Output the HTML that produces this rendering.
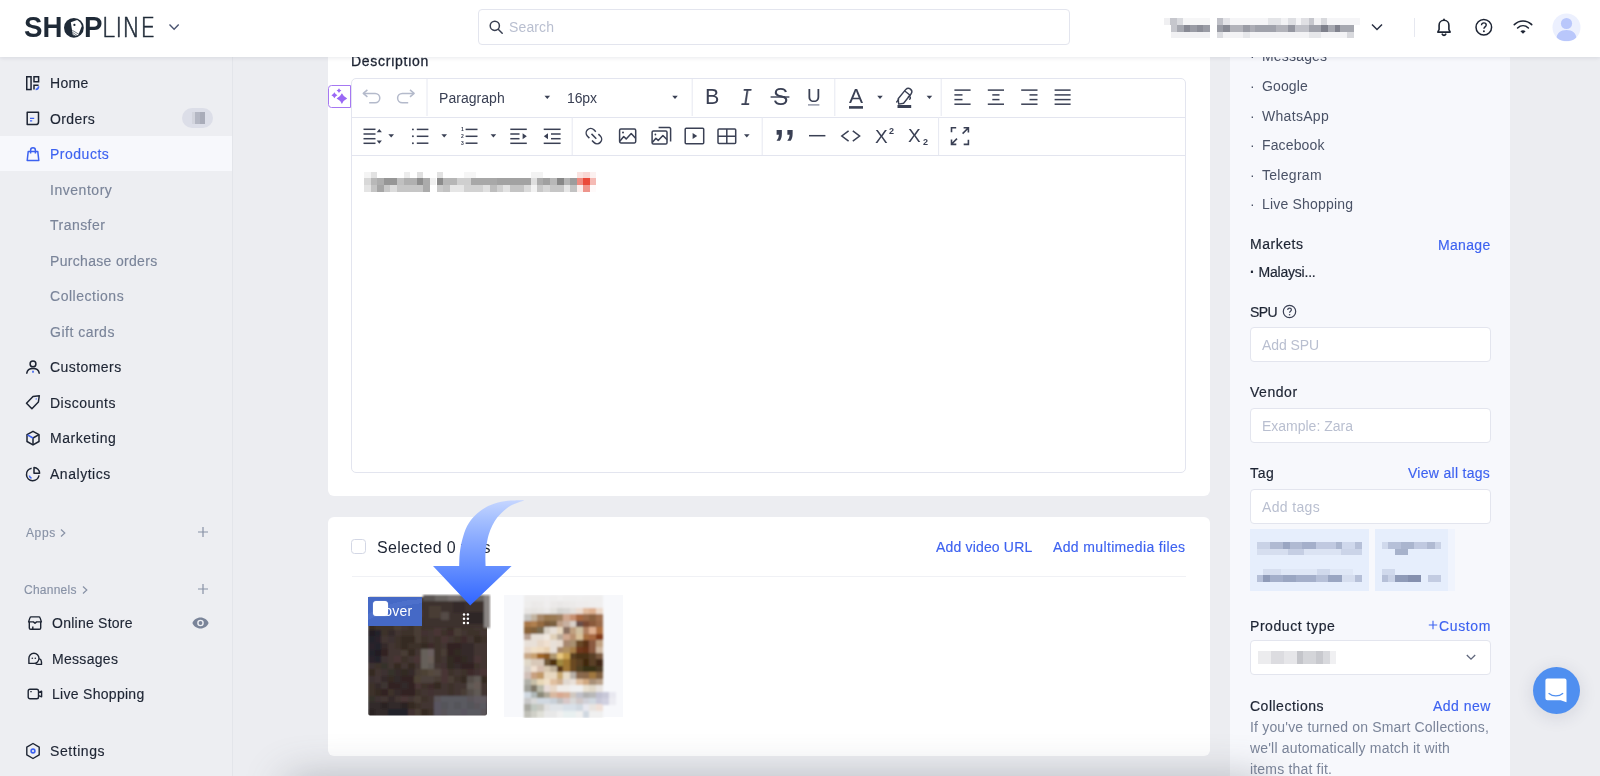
<!DOCTYPE html>
<html lang="en">
<head>
<meta charset="utf-8">
<title>SHOPLINE Admin - Product</title>
<style>
*{box-sizing:border-box;margin:0;padding:0}
html,body{width:1600px;height:776px;overflow:hidden}
body{position:relative;background:#ecedf1;font-family:"Liberation Sans",sans-serif;font-size:14px;color:#1d2433;-webkit-font-smoothing:antialiased}
.abs{position:absolute}
.t,#side .nav,#side .sec,#rp .li,#rp .lab,#rp .lnk,#rp .dot,#rp .inp span,#search .ph,#ctext{will-change:transform}
.t{position:absolute;white-space:nowrap;height:20px;line-height:20px}
/* header */
#hdr{position:absolute;left:0;top:0;width:1600px;height:56.600px;background:#fff;box-shadow:0 1px 4px rgba(30,40,70,.10);z-index:20}
#search{position:absolute;left:478px;top:9px;width:592px;height:36px;border:1px solid #e3e5ee;border-radius:4px;background:#fff}
#search .ph{position:absolute;left:30px;top:7px;line-height:20px;font-size:14px;color:#b9bfd0}
/* sidebar */
#side{position:absolute;left:0;top:56px;width:233px;height:720px;background:#edeef2;border-right:1px solid #e3e5ea;z-index:5}
#side .nav{position:absolute;left:50px;height:20px;line-height:20px;font-size:14px;color:#1d2433;white-space:nowrap;letter-spacing:.25px}
#side .nav{-webkit-text-stroke:.22px currentColor}
#side .sub{color:#7a8499;-webkit-text-stroke:.12px currentColor}
#side .act{position:absolute;left:0;top:80px;width:232px;height:35px;background:#f7f8fc}
#side .sec{-webkit-text-stroke:.15px currentColor;position:absolute;height:16px;line-height:16px;font-size:12px;color:#8892a6;white-space:nowrap;letter-spacing:.3px}
#side svg{position:absolute}
#side .nav,#side svg,#side .sec{-webkit-text-stroke:.15px currentColor;margin-top:.7px}
/* main cards */
.card{position:absolute;background:#fff;border-radius:6px}
/* right panel */
#rp{position:absolute;left:1230px;top:56px;width:280px;height:720px;background:#f7f8fc}
#rp .li{position:absolute;left:32px;height:20px;line-height:20px;font-size:14px;color:#4a5266;white-space:nowrap;letter-spacing:.2px}
#rp .dot{position:absolute;left:20px;height:20px;line-height:20px;font-size:14px;color:#4a5266}
#rp .lab{position:absolute;left:20px;height:20px;line-height:20px;font-size:14px;color:#1d2433;white-space:nowrap;letter-spacing:.2px}
#rp .lab{-webkit-text-stroke:.2px currentColor}
#rp .lnk,.blue.t{-webkit-text-stroke:.15px currentColor}
#rp .lnk{position:absolute;right:20px;height:20px;line-height:20px;font-size:14px;color:#3d62f0;white-space:nowrap;letter-spacing:.2px}
#rp .inp{position:absolute;left:20px;width:241px;height:35px;border:1px solid #e3e5ee;border-radius:4px;background:#fff}
#rp .inp span{position:absolute;left:11px;top:7px;line-height:20px;font-size:14px;color:#b9bfd0;letter-spacing:.2px}
.blue,#side .blue{color:#3d62f0}
</style>
</head>
<body>

<!-- ================= MAIN CARDS ================= -->
<div class="card" id="card1" style="left:328px;top:-20px;width:882px;height:516px">
  <div class="t" style="left:23px;top:71px;font-size:14px;color:#1d2433;-webkit-text-stroke:.3px #1d2433;letter-spacing:0.73px">Description</div>
</div>
<!-- AI button -->
<div class="abs" style="left:328px;top:84.500px;width:23.300px;height:23px;border:1.300px solid #a678f2;border-radius:3.500px 0 0 3.500px;background:#fff;z-index:3"></div>
<svg class="abs" style="left:328px;top:84px;z-index:4" width="24" height="24" viewBox="328 84 24 24" fill="#9a68f5"><path d="M341.9 93.30Q343.60 96.90 347.20 98.6Q343.60 100.30 341.9 103.90Q340.20 100.30 336.60 98.6Q340.20 96.90 341.9 93.30z"/><path d="M334.4 92.20Q335.36 94.24 337.40 95.2Q335.36 96.16 334.4 98.20Q333.44 96.16 331.40 95.2Q333.44 94.24 334.4 92.20z"/><path d="M339 88.20Q339.77 89.83 341.40 90.6Q339.77 91.37 339 93.00Q338.23 91.37 336.60 90.6Q338.23 89.83 339 88.20z"/></svg>
<!-- editor -->
<div class="abs" id="editor" style="left:351px;top:78px;width:835px;height:395px;border:1px solid #e3e5ef;border-radius:5px;background:#fff">
  <div class="abs" style="left:0;top:38px;width:833px;height:1px;background:#e3e5ef"></div>
  <div class="abs" style="left:0;top:76px;width:833px;height:1px;background:#e3e5ef"></div>
</div>
<svg class="abs" style="left:351px;top:78px" width="835" height="78" viewBox="351 78 835 78" fill="none" stroke="#3a4054" stroke-width="1.500"><path d="M427 79V116" stroke="#e6e8f1" stroke-width="1"/><path d="M692.2 79V116" stroke="#e6e8f1" stroke-width="1"/><path d="M834.8 79V116" stroke="#e6e8f1" stroke-width="1"/><path d="M941.2 79V116" stroke="#e6e8f1" stroke-width="1"/><path d="M572.2 117V155" stroke="#e6e8f1" stroke-width="1"/><path d="M762.2 117V155" stroke="#e6e8f1" stroke-width="1"/><path d="M938.6 117V155" stroke="#e6e8f1" stroke-width="1"/><g stroke="#b4bacb" stroke-width="1.500" stroke-linejoin="round"><path d="M367.400 89.900l-4.100 3.500 4.100 3.500"/><path d="M363.600 93.400h11.500a4.700 4.700 0 0 1 0 9.400h-5.900"/><path d="M410 89.900l4.100 3.500-4.100 3.500"/><path d="M413.800 93.400h-11.500a4.700 4.700 0 0 0 0 9.400h5.900"/></g><path d="M544.5 95.8h5.600l-2.800 3.200z" fill="#3a4054" stroke="none"/><path d="M672.2 95.8h5.600l-2.800 3.200z" fill="#3a4054" stroke="none"/><path d="M877.2 95.8h5.600l-2.800 3.200z" fill="#3a4054" stroke="none"/><path d="M926.6 95.8h5.600l-2.800 3.200z" fill="#3a4054" stroke="none"/><path d="M770.600 97H789.400" stroke-width="1.400"/><path d="M808 104.900H819.400" stroke="#8d93a4" stroke-width="1.400"/><rect x="849" y="106.100" width="14" height="2.600" fill="#3a4054" stroke="none"/><rect x="897.500" y="105" width="13.700" height="3" fill="#3a4054" stroke="none"/><g stroke-width="1.400" stroke-linejoin="round" stroke-linecap="round"><path d="M898.200 98.800l7.600-9.400a3.500 3.500 0 0 1 5.400 4.400l-7.600 9.400-4.900.9z"/><path d="M904.800 91l5.300 4.300"/><path d="M898.600 99.400l-1.900 2.600"/><path d="M908.500 96.500c1.800-.4 2.600 1.400 1.200 2.800"/></g><path d="M954.4 90.1H970.6"/><path d="M954.4 94.9H962.5"/><path d="M954.4 99.6H962.5"/><path d="M954.4 104.2H970.6"/><path d="M987.8 90.1H1004"/><path d="M992.3 94.9H999.5"/><path d="M992.3 99.6H999.5"/><path d="M987.8 104.2H1004"/><path d="M1021.2 90.1H1037.5"/><path d="M1029.5 94.9H1037.5"/><path d="M1029.5 99.6H1037.5"/><path d="M1021.2 104.2H1037.5"/><path d="M1054.6 90.1H1070.6"/><path d="M1054.6 94.9H1070.6"/><path d="M1054.6 99.6H1070.6"/><path d="M1054.6 104.2H1070.6"/><path d="M363.5 129.3H375.5"/><path d="M363.5 134H375.5"/><path d="M363.5 138.7H375.5"/><path d="M363.5 143.3H375.5"/><path d="M376.700 132.200l2.600-3.200 2.600 3.200zM376.700 140.600l2.600 3.200 2.600-3.200z" fill="#3a4054" stroke="none"/><path d="M388.4 134.2h5.600l-2.800 3.200z" fill="#3a4054" stroke="none"/><path d="M441.4 134.2h5.600l-2.800 3.200z" fill="#3a4054" stroke="none"/><path d="M490.59999999999997 134.2h5.600l-2.800 3.200z" fill="#3a4054" stroke="none"/><path d="M744.0 134.2h5.600l-2.800 3.200z" fill="#3a4054" stroke="none"/><path d="M416.8 129.4H428.4"/><path d="M416.8 136.3H428.4"/><path d="M416.8 143.2H428.4"/><circle cx="412.900" cy="129.4" r=".95" fill="#3a4054" stroke="none"/><circle cx="412.900" cy="136.3" r=".95" fill="#3a4054" stroke="none"/><circle cx="412.900" cy="143.2" r=".95" fill="#3a4054" stroke="none"/><path d="M465.6 129.4H477.5"/><path d="M465.6 136.3H477.5"/><path d="M465.6 143.2H477.5"/><path d="M510.3 129.3H526.8"/><path d="M510.3 134H519.5"/><path d="M510.3 138.7H519.5"/><path d="M510.3 143.3H526.8"/><path d="M522.600 133.300l4.200 3-4.200 3z" fill="#3a4054" stroke="none"/><path d="M543.7 129.3H560.6"/><path d="M551 134H560.6"/><path d="M551 138.7H560.6"/><path d="M543.7 143.3H560.6"/><path d="M548 133.300l-4.200 3 4.200 3z" fill="#3a4054" stroke="none"/><g stroke-width="1.500"><path d="M595.800 131.700L593.900 129.800A4.500 4.500 0 0 0 587.500 136.200L589.400 138.100"/><path d="M598.400 134.100L600.300 136A4.500 4.500 0 0 1 593.900 142.400L592 140.500"/><path d="M591.500 133.900L596.300 138.700"/></g><g stroke-width="1.500" stroke-linejoin="round"><rect x="619.600" y="129.100" width="16.100" height="13.800" rx="1.300"/><path d="M619.800 141.200l3.900-4.700 2.500 2.400 5-5.400 4.600 5"/><circle cx="623" cy="132.500" r="1" fill="#3a4054" stroke="none"/></g><g stroke-width="1.500" stroke-linejoin="round"><rect x="652.100" y="131" width="14.900" height="13" rx="1.300"/><path d="M658.600 127.600h10.800a1.200 1.200 0 0 1 1.200 1.200v12.800"/><path d="M652.300 142.600l3.600-4.300 2.300 2.100 4.700-4.900 4.200 4.300"/><circle cx="655.400" cy="134.500" r=".9" fill="#3a4054" stroke="none"/></g><g stroke-width="1.500" stroke-linejoin="round"><rect x="685.200" y="128.300" width="18.500" height="15.400" rx="1"/><path d="M692.600 132.900l4.600 3.100-4.600 3.100z" fill="#3a4054" stroke="none"/></g><g stroke-width="1.500" stroke-linejoin="round"><rect x="718" y="128.900" width="17.700" height="14.600" rx="1"/><path d="M718 136.200h17.700M726.800 128.900v14.600"/></g><path d="M809 135.700H825.400"/><g stroke-width="1.500"><path d="M848.600 130.800l-6.800 5.200 6.800 5.200"/><path d="M852.800 130.800l6.800 5.200-6.800 5.200"/></g><g stroke-width="1.600"><path d="M951.500 132.300v-4.600h4.700"/><path d="M968.400 139.800v4.600h-4.700"/><path d="M962.600 133.600l5.600-5.600M963.600 127.800h4.800v4.800"/><path d="M957 138.600l-5.600 5.600M956.300 144.400h-4.800v-4.800"/></g></svg>
<div class="t" style="left:439px;top:87.500px;font-size:14px;color:#3a4054;letter-spacing:0.04px">Paragraph</div>
<div class="t" style="left:567px;top:87.500px;font-size:14px;color:#3a4054;letter-spacing:-0.12px">16px</div>
<div class="t tb" style="left:705.300px;top:85.200px;font-size:21.500px;height:24px;line-height:24px;color:#3a4054">B</div>
<div class="t tb" style="left:738.700px;top:87.400px;font-size:24px;height:24px;line-height:24px;transform:scaleX(.8);color:#3a4054;font-family:'Liberation Mono',monospace;font-style:italic">I</div>
<div class="t tb" style="left:772.600px;top:85.200px;font-size:23px;height:24px;line-height:24px;color:#3a4054">S</div>
<div class="t tb" style="left:806.500px;top:83.500px;font-size:19px;height:24px;line-height:24px;color:#3a4054">U</div>
<div class="t tb" style="left:849px;top:84.300px;font-size:21px;height:24px;line-height:24px;color:#3a4054">A</div>
<div class="t tb" style="left:874.500px;top:124.800px;font-size:19px;height:24px;line-height:24px;color:#3a4054">X</div>
<div class="t tb" style="left:889.300px;top:123.300px;font-size:9px;height:16px;line-height:16px;color:#3a4054;font-weight:700">2</div>
<div class="t tb" style="left:907.800px;top:124px;font-size:19px;height:24px;line-height:24px;color:#3a4054">X</div>
<div class="t tb" style="left:923px;top:133.800px;font-size:9px;height:16px;line-height:16px;color:#3a4054;font-weight:700">2</div>
<div class="t tb" style="left:460.500px;top:125px;font-size:5px;height:8px;line-height:8px;color:#3a4054;font-weight:700">1</div>
<div class="t tb" style="left:460.500px;top:132px;font-size:5px;height:8px;line-height:8px;color:#3a4054;font-weight:700">2</div>
<div class="t tb" style="left:460.500px;top:139px;font-size:5px;height:8px;line-height:8px;color:#3a4054;font-weight:700">3</div>
<div class="t tb" style="left:773.600px;top:123px;font-size:37.500px;height:40px;line-height:40px;color:#3a4054;font-weight:700;letter-spacing:1.800px">&#8217;&#8217;</div>
<!-- blurred description text -->
<div class="abs" style="left:364px;top:171.700px;width:232px;height:21px;filter:blur(.7px)">
  <div class="abs" style="left:0;top:0;width:66px;height:7px;background:linear-gradient(90deg,#f4f4f4 0 10%,#e2e2e2 10% 20%,#fff 20% 60%,#ededed 60% 70%,#fff 70% 80%,#e0e0e0 80% 90%,#fff 90%)"></div>
  <div class="abs" style="left:0;top:6.600px;width:66px;height:7px;background:linear-gradient(90deg,#d8d8d8 0 10%,#b8b8b8 10% 20%,#adadad 20% 30%,#969696 30% 50%,#c0c0c0 50% 60%,#b0b0b0 60% 80%,#8e8e8e 80% 90%,#ababab 90%)"></div>
  <div class="abs" style="left:0;top:13.200px;width:66px;height:7px;background:linear-gradient(90deg,#e4e4e4 0 10%,#c4c4c4 10% 20%,#a6a6a6 20% 30%,#c8c8c8 30% 40%,#dcdcdc 40% 50%,#c6c6c6 50% 90%,#ababab 90%)"></div>
  <div class="abs" style="left:66px;top:6.600px;width:6px;height:7px;background:#f0f0f0"></div>
  <div class="abs" style="left:72.500px;top:0;width:140px;height:7px;background:linear-gradient(90deg,#e2e2e2 0 4.600%,#fff 4.600% 19%,#f6f6f6 19% 28%,#fff 28% 67%,#f3f3f3 67% 76%,#fff 76%)"></div>
  <div class="abs" style="left:72.500px;top:6.600px;width:140px;height:7px;background:linear-gradient(90deg,#8c8c8c 0 4.600%,#b6b6b6 4.600% 14%,#cfcfcf 14% 24%,#a8a8a8 24% 43%,#a2a2a2 43% 67%,#dedede 67% 71.500%,#ababab 71.500% 76%,#a0a0a0 76% 81%,#b8b8b8 81% 86%,#878787 86% 90.500%,#b4b4b4 90.500% 95%,#9c9c9c 95%)"></div>
  <div class="abs" style="left:72.500px;top:13.200px;width:140px;height:7px;background:linear-gradient(90deg,#cacaca 0 4.600%,#c2c2c2 4.600% 9.500%,#e6e6e6 9.500% 19%,#d2d2d2 19% 33%,#e0e0e0 33% 38%,#bdbdbd 38% 43%,#d0d0d0 43% 47.500%,#e2e2e2 47.500% 52%,#c4c4c4 52% 62%,#dadada 62% 67%,#f2f2f2 67% 71.500%,#c8c8c8 71.500% 76%,#d6d6d6 76% 81%,#c6c6c6 81% 90.500%,#e6e6e6 90.500% 95%,#c2c2c2 95%)"></div>
  <div class="abs" style="left:212.500px;top:0;width:19.500px;height:7px;background:linear-gradient(90deg,#fbe3e0 0 33%,#f9d7d4 33% 66%,#fcf1f0 66%)"></div>
  <div class="abs" style="left:212.500px;top:6.600px;width:19.500px;height:7px;background:linear-gradient(90deg,#ee8a80 0 33%,#ea4a3a 33% 66%,#f5bab4 66%)"></div>
  <div class="abs" style="left:212.500px;top:13.200px;width:19.500px;height:7px;background:linear-gradient(90deg,#fbeeec 0 33%,#ee958c 33% 66%,#fffafa 66%)"></div>
</div>
<div class="card" id="card2" style="left:328px;top:517px;width:882px;height:239px">
  <div class="abs" style="left:23.200px;top:21.800px;width:15.300px;height:15.300px;border:1px solid #d3d7e5;border-radius:3.500px;background:#fff"></div>
  <div class="t" id="selt" style="left:49px;top:20.800px;font-size:16px;color:#1d2433;letter-spacing:0.33px">Selected 0 files</div>
  <div class="t blue" id="avu" style="left:608px;top:19.700px;font-size:14px;letter-spacing:0.17px">Add video URL</div>
  <div class="t blue" id="amf" style="left:725px;top:19.700px;font-size:14px;letter-spacing:.36px">Add multimedia files</div>
  <div class="abs" style="left:24px;top:59px;width:834px;height:1px;background:#f0f1f5"></div>
</div>
<!-- image 1 -->
<svg class="abs" style="left:368px;top:594px" width="123" height="123" viewBox="0 0 123 123" shape-rendering="crispEdges">
  <defs><filter id="bl1" x="-5%" y="-5%" width="110%" height="110%"><feGaussianBlur stdDeviation="1.1"/></filter><clipPath id="c1"><rect x="0" y="2.500" width="119" height="119" rx="2"/></clipPath></defs>
  <g clip-path="url(#c1)"><g transform="translate(0 2.500)" filter="url(#bl1)"><rect width="119" height="119" fill="#3e322e"/><path fill="#3c302a" d="M0.0 0.0h6.8v6.8h-6.8zM19.8 0.0h6.8v6.8h-6.8zM39.7 0.0h6.8v6.8h-6.8zM72.7 0.0h6.8v6.8h-6.8zM33.1 6.6h6.8v6.8h-6.8zM39.7 6.6h6.8v6.8h-6.8zM52.9 6.6h6.8v6.8h-6.8zM59.5 6.6h6.8v6.8h-6.8zM99.2 6.6h6.8v6.8h-6.8zM105.8 6.6h6.8v6.8h-6.8zM13.2 13.2h6.8v6.8h-6.8zM19.8 13.2h6.8v6.8h-6.8zM26.4 13.2h6.8v6.8h-6.8zM46.3 13.2h6.8v6.8h-6.8zM59.5 13.2h6.8v6.8h-6.8zM85.9 13.2h6.8v6.8h-6.8zM99.2 13.2h6.8v6.8h-6.8zM112.4 13.2h6.8v6.8h-6.8zM13.2 19.8h6.8v6.8h-6.8zM26.4 19.8h6.8v6.8h-6.8zM52.9 19.8h6.8v6.8h-6.8zM79.3 19.8h6.8v6.8h-6.8zM92.6 19.8h6.8v6.8h-6.8zM99.2 19.8h6.8v6.8h-6.8zM6.6 26.4h6.8v6.8h-6.8zM13.2 26.4h6.8v6.8h-6.8zM19.8 26.4h6.8v6.8h-6.8zM39.7 26.4h6.8v6.8h-6.8zM52.9 26.4h6.8v6.8h-6.8zM59.5 26.4h6.8v6.8h-6.8zM92.6 26.4h6.8v6.8h-6.8zM99.2 26.4h6.8v6.8h-6.8zM112.4 26.4h6.8v6.8h-6.8zM119.0 26.4h6.8v6.8h-6.8zM13.2 33.1h6.8v6.8h-6.8zM33.1 33.1h6.8v6.8h-6.8zM39.7 33.1h6.8v6.8h-6.8zM72.7 33.1h6.8v6.8h-6.8zM99.2 33.1h6.8v6.8h-6.8zM105.8 33.1h6.8v6.8h-6.8zM26.4 39.7h6.8v6.8h-6.8zM52.9 39.7h6.8v6.8h-6.8zM66.1 39.7h6.8v6.8h-6.8zM85.9 39.7h6.8v6.8h-6.8zM112.4 39.7h6.8v6.8h-6.8zM26.4 46.3h6.8v6.8h-6.8zM39.7 46.3h6.8v6.8h-6.8zM46.3 46.3h6.8v6.8h-6.8zM66.1 46.3h6.8v6.8h-6.8zM66.1 52.9h6.8v6.8h-6.8zM33.1 59.5h6.8v6.8h-6.8zM66.1 59.5h6.8v6.8h-6.8zM119.0 59.5h6.8v6.8h-6.8zM6.6 66.1h6.8v6.8h-6.8zM105.8 66.1h6.8v6.8h-6.8zM119.0 66.1h6.8v6.8h-6.8zM79.3 72.7h6.8v6.8h-6.8zM92.6 72.7h6.8v6.8h-6.8zM85.9 79.3h6.8v6.8h-6.8zM0.0 85.9h6.8v6.8h-6.8zM52.9 85.9h6.8v6.8h-6.8zM79.3 85.9h6.8v6.8h-6.8zM119.0 85.9h6.8v6.8h-6.8zM0.0 92.6h6.8v6.8h-6.8zM19.8 92.6h6.8v6.8h-6.8zM46.3 92.6h6.8v6.8h-6.8zM79.3 92.6h6.8v6.8h-6.8zM52.9 99.2h6.8v6.8h-6.8zM46.3 105.8h6.8v6.8h-6.8zM59.5 112.4h6.8v6.8h-6.8zM119.0 112.4h6.8v6.8h-6.8zM46.3 119.0h6.8v6.8h-6.8zM92.6 119.0h6.8v6.8h-6.8z"/><path fill="#423630" d="M6.6 0.0h6.8v6.8h-6.8zM33.1 0.0h6.8v6.8h-6.8zM52.9 0.0h6.8v6.8h-6.8zM59.5 0.0h6.8v6.8h-6.8zM85.9 0.0h6.8v6.8h-6.8zM92.6 0.0h6.8v6.8h-6.8zM119.0 0.0h6.8v6.8h-6.8zM0.0 6.6h6.8v6.8h-6.8zM79.3 6.6h6.8v6.8h-6.8zM92.6 6.6h6.8v6.8h-6.8zM6.6 13.2h6.8v6.8h-6.8zM39.7 13.2h6.8v6.8h-6.8zM0.0 19.8h6.8v6.8h-6.8zM6.6 19.8h6.8v6.8h-6.8zM39.7 19.8h6.8v6.8h-6.8zM72.7 19.8h6.8v6.8h-6.8zM85.9 19.8h6.8v6.8h-6.8zM105.8 19.8h6.8v6.8h-6.8zM119.0 19.8h6.8v6.8h-6.8zM33.1 26.4h6.8v6.8h-6.8zM72.7 26.4h6.8v6.8h-6.8zM105.8 26.4h6.8v6.8h-6.8zM26.4 33.1h6.8v6.8h-6.8zM59.5 33.1h6.8v6.8h-6.8zM92.6 33.1h6.8v6.8h-6.8zM112.4 33.1h6.8v6.8h-6.8zM13.2 39.7h6.8v6.8h-6.8zM59.5 39.7h6.8v6.8h-6.8zM79.3 39.7h6.8v6.8h-6.8zM99.2 39.7h6.8v6.8h-6.8zM119.0 39.7h6.8v6.8h-6.8zM19.8 46.3h6.8v6.8h-6.8zM72.7 46.3h6.8v6.8h-6.8zM105.8 46.3h6.8v6.8h-6.8zM112.4 46.3h6.8v6.8h-6.8zM119.0 46.3h6.8v6.8h-6.8zM19.8 52.9h6.8v6.8h-6.8zM26.4 52.9h6.8v6.8h-6.8zM46.3 52.9h6.8v6.8h-6.8zM105.8 52.9h6.8v6.8h-6.8zM112.4 52.9h6.8v6.8h-6.8zM119.0 52.9h6.8v6.8h-6.8zM19.8 59.5h6.8v6.8h-6.8zM39.7 59.5h6.8v6.8h-6.8zM72.7 59.5h6.8v6.8h-6.8zM112.4 59.5h6.8v6.8h-6.8zM19.8 66.1h6.8v6.8h-6.8zM33.1 66.1h6.8v6.8h-6.8zM46.3 66.1h6.8v6.8h-6.8zM66.1 66.1h6.8v6.8h-6.8zM112.4 66.1h6.8v6.8h-6.8zM6.6 72.7h6.8v6.8h-6.8zM85.9 72.7h6.8v6.8h-6.8zM119.0 79.3h6.8v6.8h-6.8zM72.7 85.9h6.8v6.8h-6.8zM85.9 85.9h6.8v6.8h-6.8zM92.6 85.9h6.8v6.8h-6.8zM112.4 85.9h6.8v6.8h-6.8zM52.9 92.6h6.8v6.8h-6.8zM66.1 92.6h6.8v6.8h-6.8zM72.7 92.6h6.8v6.8h-6.8zM85.9 92.6h6.8v6.8h-6.8zM112.4 92.6h6.8v6.8h-6.8zM13.2 99.2h6.8v6.8h-6.8zM26.4 99.2h6.8v6.8h-6.8zM39.7 99.2h6.8v6.8h-6.8zM59.5 99.2h6.8v6.8h-6.8zM52.9 105.8h6.8v6.8h-6.8zM59.5 105.8h6.8v6.8h-6.8zM39.7 119.0h6.8v6.8h-6.8zM52.9 119.0h6.8v6.8h-6.8zM66.1 119.0h6.8v6.8h-6.8zM99.2 119.0h6.8v6.8h-6.8zM105.8 119.0h6.8v6.8h-6.8zM119.0 119.0h6.8v6.8h-6.8z"/><path fill="#483c36" d="M13.2 0.0h6.8v6.8h-6.8zM105.8 0.0h6.8v6.8h-6.8zM112.4 0.0h6.8v6.8h-6.8zM112.4 6.6h6.8v6.8h-6.8zM119.0 6.6h6.8v6.8h-6.8zM66.1 13.2h6.8v6.8h-6.8zM92.6 13.2h6.8v6.8h-6.8zM105.8 13.2h6.8v6.8h-6.8zM33.1 19.8h6.8v6.8h-6.8zM26.4 26.4h6.8v6.8h-6.8zM46.3 26.4h6.8v6.8h-6.8zM85.9 26.4h6.8v6.8h-6.8zM46.3 33.1h6.8v6.8h-6.8zM85.9 33.1h6.8v6.8h-6.8zM119.0 33.1h6.8v6.8h-6.8zM46.3 39.7h6.8v6.8h-6.8zM33.1 52.9h6.8v6.8h-6.8zM72.7 52.9h6.8v6.8h-6.8zM46.3 72.7h6.8v6.8h-6.8zM66.1 79.3h6.8v6.8h-6.8zM79.3 79.3h6.8v6.8h-6.8zM92.6 92.6h6.8v6.8h-6.8zM46.3 99.2h6.8v6.8h-6.8zM119.0 99.2h6.8v6.8h-6.8zM46.3 112.4h6.8v6.8h-6.8zM79.3 119.0h6.8v6.8h-6.8z"/><path fill="#423030" d="M26.4 0.0h6.8v6.8h-6.8zM46.3 0.0h6.8v6.8h-6.8zM19.8 6.6h6.8v6.8h-6.8zM72.7 6.6h6.8v6.8h-6.8zM85.9 6.6h6.8v6.8h-6.8zM52.9 33.1h6.8v6.8h-6.8zM72.7 66.1h6.8v6.8h-6.8zM105.8 72.7h6.8v6.8h-6.8zM59.5 92.6h6.8v6.8h-6.8zM39.7 112.4h6.8v6.8h-6.8zM59.5 119.0h6.8v6.8h-6.8zM85.9 119.0h6.8v6.8h-6.8zM112.4 119.0h6.8v6.8h-6.8z"/><path fill="#362a24" d="M66.1 0.0h6.8v6.8h-6.8zM79.3 0.0h6.8v6.8h-6.8zM99.2 0.0h6.8v6.8h-6.8zM13.2 6.6h6.8v6.8h-6.8zM26.4 6.6h6.8v6.8h-6.8zM46.3 6.6h6.8v6.8h-6.8zM33.1 13.2h6.8v6.8h-6.8zM79.3 13.2h6.8v6.8h-6.8zM119.0 13.2h6.8v6.8h-6.8zM19.8 19.8h6.8v6.8h-6.8zM59.5 19.8h6.8v6.8h-6.8zM66.1 19.8h6.8v6.8h-6.8zM0.0 26.4h6.8v6.8h-6.8zM79.3 26.4h6.8v6.8h-6.8zM33.1 39.7h6.8v6.8h-6.8zM39.7 39.7h6.8v6.8h-6.8zM105.8 39.7h6.8v6.8h-6.8zM33.1 46.3h6.8v6.8h-6.8zM52.9 46.3h6.8v6.8h-6.8zM39.7 52.9h6.8v6.8h-6.8zM26.4 66.1h6.8v6.8h-6.8zM39.7 66.1h6.8v6.8h-6.8zM0.0 72.7h6.8v6.8h-6.8zM19.8 79.3h6.8v6.8h-6.8zM92.6 79.3h6.8v6.8h-6.8zM112.4 79.3h6.8v6.8h-6.8zM66.1 85.9h6.8v6.8h-6.8zM6.6 92.6h6.8v6.8h-6.8zM39.7 105.8h6.8v6.8h-6.8zM52.9 112.4h6.8v6.8h-6.8zM72.7 119.0h6.8v6.8h-6.8z"/><path fill="#3c2a2a" d="M6.6 6.6h6.8v6.8h-6.8zM46.3 19.8h6.8v6.8h-6.8zM112.4 19.8h6.8v6.8h-6.8zM79.3 33.1h6.8v6.8h-6.8zM92.6 39.7h6.8v6.8h-6.8zM59.5 46.3h6.8v6.8h-6.8zM99.2 72.7h6.8v6.8h-6.8zM59.5 85.9h6.8v6.8h-6.8zM119.0 92.6h6.8v6.8h-6.8zM119.0 105.8h6.8v6.8h-6.8z"/><path fill="#483636" d="M66.1 6.6h6.8v6.8h-6.8zM0.0 13.2h6.8v6.8h-6.8zM52.9 13.2h6.8v6.8h-6.8zM72.7 13.2h6.8v6.8h-6.8zM66.1 26.4h6.8v6.8h-6.8zM66.1 33.1h6.8v6.8h-6.8zM72.7 39.7h6.8v6.8h-6.8zM26.4 59.5h6.8v6.8h-6.8zM46.3 59.5h6.8v6.8h-6.8zM105.8 59.5h6.8v6.8h-6.8zM72.7 72.7h6.8v6.8h-6.8zM112.4 72.7h6.8v6.8h-6.8zM119.0 72.7h6.8v6.8h-6.8zM72.7 79.3h6.8v6.8h-6.8zM46.3 85.9h6.8v6.8h-6.8zM33.1 99.2h6.8v6.8h-6.8z"/><path fill="#241e24" d="M0.0 33.1h6.8v6.8h-6.8zM6.6 52.9h6.8v6.8h-6.8z"/><path fill="#24242a" d="M6.6 33.1h6.8v6.8h-6.8zM0.0 39.7h6.8v6.8h-6.8zM6.6 46.3h6.8v6.8h-6.8zM0.0 52.9h6.8v6.8h-6.8zM6.6 59.5h6.8v6.8h-6.8zM19.8 112.4h6.8v6.8h-6.8zM26.4 112.4h6.8v6.8h-6.8zM33.1 112.4h6.8v6.8h-6.8zM19.8 119.0h6.8v6.8h-6.8zM26.4 119.0h6.8v6.8h-6.8zM33.1 119.0h6.8v6.8h-6.8z"/><path fill="#362a2a" d="M19.8 33.1h6.8v6.8h-6.8zM13.2 46.3h6.8v6.8h-6.8zM92.6 46.3h6.8v6.8h-6.8zM99.2 46.3h6.8v6.8h-6.8zM92.6 52.9h6.8v6.8h-6.8zM99.2 52.9h6.8v6.8h-6.8zM99.2 59.5h6.8v6.8h-6.8zM85.9 66.1h6.8v6.8h-6.8zM26.4 72.7h6.8v6.8h-6.8zM39.7 72.7h6.8v6.8h-6.8zM13.2 79.3h6.8v6.8h-6.8zM6.6 85.9h6.8v6.8h-6.8zM26.4 92.6h6.8v6.8h-6.8zM19.8 99.2h6.8v6.8h-6.8z"/><path fill="#2a242a" d="M6.6 39.7h6.8v6.8h-6.8zM0.0 46.3h6.8v6.8h-6.8zM0.0 59.5h6.8v6.8h-6.8z"/><path fill="#3c3030" d="M19.8 39.7h6.8v6.8h-6.8zM13.2 59.5h6.8v6.8h-6.8zM0.0 66.1h6.8v6.8h-6.8zM13.2 72.7h6.8v6.8h-6.8zM0.0 79.3h6.8v6.8h-6.8zM6.6 99.2h6.8v6.8h-6.8z"/><path fill="#302424" d="M79.3 46.3h6.8v6.8h-6.8zM85.9 46.3h6.8v6.8h-6.8zM13.2 52.9h6.8v6.8h-6.8zM79.3 52.9h6.8v6.8h-6.8zM85.9 59.5h6.8v6.8h-6.8zM92.6 66.1h6.8v6.8h-6.8zM99.2 66.1h6.8v6.8h-6.8zM33.1 79.3h6.8v6.8h-6.8zM39.7 79.3h6.8v6.8h-6.8zM19.8 85.9h6.8v6.8h-6.8zM26.4 85.9h6.8v6.8h-6.8zM39.7 85.9h6.8v6.8h-6.8zM13.2 92.6h6.8v6.8h-6.8zM33.1 92.6h6.8v6.8h-6.8zM39.7 92.6h6.8v6.8h-6.8z"/><path fill="#66605a" d="M52.9 52.9h6.8v6.8h-6.8zM52.9 59.5h6.8v6.8h-6.8zM52.9 66.1h6.8v6.8h-6.8z"/><path fill="#6c6060" d="M59.5 52.9h6.8v6.8h-6.8z"/><path fill="#302a24" d="M85.9 52.9h6.8v6.8h-6.8zM79.3 59.5h6.8v6.8h-6.8zM92.6 59.5h6.8v6.8h-6.8zM79.3 66.1h6.8v6.8h-6.8zM33.1 72.7h6.8v6.8h-6.8z"/><path fill="#6c605a" d="M59.5 59.5h6.8v6.8h-6.8z"/><path fill="#36302a" d="M13.2 66.1h6.8v6.8h-6.8zM19.8 72.7h6.8v6.8h-6.8zM0.0 99.2h6.8v6.8h-6.8z"/><path fill="#605a54" d="M59.5 66.1h6.8v6.8h-6.8zM105.8 79.3h6.8v6.8h-6.8zM99.2 85.9h6.8v6.8h-6.8zM105.8 92.6h6.8v6.8h-6.8z"/><path fill="#4e4236" d="M52.9 72.7h6.8v6.8h-6.8zM46.3 79.3h6.8v6.8h-6.8z"/><path fill="#54483c" d="M59.5 72.7h6.8v6.8h-6.8z"/><path fill="#544842" d="M66.1 72.7h6.8v6.8h-6.8z"/><path fill="#423636" d="M6.6 79.3h6.8v6.8h-6.8z"/><path fill="#302a2a" d="M26.4 79.3h6.8v6.8h-6.8zM33.1 85.9h6.8v6.8h-6.8zM0.0 105.8h6.8v6.8h-6.8zM6.6 105.8h6.8v6.8h-6.8zM19.8 105.8h6.8v6.8h-6.8zM26.4 105.8h6.8v6.8h-6.8zM6.6 112.4h6.8v6.8h-6.8zM13.2 112.4h6.8v6.8h-6.8zM0.0 119.0h6.8v6.8h-6.8zM6.6 119.0h6.8v6.8h-6.8z"/><path fill="#4e423c" d="M52.9 79.3h6.8v6.8h-6.8zM59.5 79.3h6.8v6.8h-6.8z"/><path fill="#544e48" d="M99.2 79.3h6.8v6.8h-6.8zM99.2 92.6h6.8v6.8h-6.8z"/><path fill="#3c3630" d="M13.2 85.9h6.8v6.8h-6.8z"/><path fill="#665a54" d="M105.8 85.9h6.8v6.8h-6.8z"/><path fill="#5a545a" d="M66.1 99.2h6.8v6.8h-6.8zM99.2 99.2h6.8v6.8h-6.8zM105.8 105.8h6.8v6.8h-6.8zM72.7 112.4h6.8v6.8h-6.8zM112.4 112.4h6.8v6.8h-6.8z"/><path fill="#5a5a60" d="M72.7 99.2h6.8v6.8h-6.8zM79.3 99.2h6.8v6.8h-6.8zM85.9 99.2h6.8v6.8h-6.8zM92.6 99.2h6.8v6.8h-6.8zM79.3 105.8h6.8v6.8h-6.8zM92.6 105.8h6.8v6.8h-6.8zM112.4 105.8h6.8v6.8h-6.8zM79.3 112.4h6.8v6.8h-6.8zM85.9 112.4h6.8v6.8h-6.8zM99.2 112.4h6.8v6.8h-6.8zM105.8 112.4h6.8v6.8h-6.8z"/><path fill="#605a60" d="M105.8 99.2h6.8v6.8h-6.8zM112.4 99.2h6.8v6.8h-6.8z"/><path fill="#2a2424" d="M13.2 105.8h6.8v6.8h-6.8zM33.1 105.8h6.8v6.8h-6.8zM0.0 112.4h6.8v6.8h-6.8zM13.2 119.0h6.8v6.8h-6.8z"/><path fill="#5a5460" d="M66.1 105.8h6.8v6.8h-6.8zM66.1 112.4h6.8v6.8h-6.8zM92.6 112.4h6.8v6.8h-6.8z"/><path fill="#54545a" d="M72.7 105.8h6.8v6.8h-6.8zM85.9 105.8h6.8v6.8h-6.8zM99.2 105.8h6.8v6.8h-6.8z"/></g></g>
  <g filter="url(#bl1)"><rect x="55" y=".5" width="66.500" height="33" fill="#3c302d"/><rect x="55" y=".5" width="66.500" height="6" fill="#6b6664"/><rect x="55" y=".5" width="12" height="6" fill="#5a5452"/><rect x="80" y=".5" width="12" height="6" fill="#77716f"/><rect x="116" y=".5" width="5.500" height="33" fill="#8a8583"/><rect x="61" y="12" width="12" height="12" fill="#4a3c34"/><rect x="85" y="6.500" width="12" height="12" fill="#35292a"/><rect x="98" y="18" width="18" height="12" fill="#2e2628"/><rect x="73" y="18" width="8" height="8" fill="#554c46"/></g>
  <rect x="0" y="2.500" width="54" height="29.500" fill="#4569c6"/>
  <path d="M0 20c14-8 30-14 54-15v4c-22 2-38 8-54 17z" fill="#5577d0" opacity=".5"/>
</svg>
<div class="t" style="left:374px;top:601px;font-size:14px;color:#fff;letter-spacing:.2px">Cover</div>
<div class="abs" style="left:372.500px;top:600.800px;width:15.500px;height:15px;border-radius:3.500px;background:#fff;box-shadow:0 0 1px rgba(255,255,255,.8)"></div>
<svg class="abs" style="left:461px;top:612px" width="10" height="14" viewBox="0 0 10 14" fill="#fff"><circle cx="3" cy="2.500" r="1.250"/><circle cx="6.900" cy="2.500" r="1.250"/><circle cx="3" cy="6.700" r="1.250"/><circle cx="6.900" cy="6.700" r="1.250"/><circle cx="3" cy="10.900" r="1.250"/><circle cx="6.900" cy="10.900" r="1.250"/></svg>
<!-- image 2 -->
<svg class="abs" style="left:504px;top:595px" width="119" height="123" viewBox="0 0 119 123" shape-rendering="crispEdges">
  <defs><filter id="bl2" x="-5%" y="-5%" width="110%" height="110%"><feGaussianBlur stdDeviation=".8"/></filter></defs>
  <rect width="119" height="122.300" fill="#f7f8fb"/>
  <g filter="url(#bl2)"><rect x="20.0" y="0.0" width="6.8" height="6.7" fill="#efeeee"/><rect x="26.5" y="0.0" width="6.8" height="6.7" fill="#efeeee"/><rect x="33.1" y="0.0" width="6.8" height="6.7" fill="#efeeee"/><rect x="39.6" y="0.0" width="6.8" height="6.7" fill="#f0eff0"/><rect x="46.1" y="0.0" width="6.8" height="6.7" fill="#efeeee"/><rect x="52.7" y="0.0" width="6.8" height="6.7" fill="#f1f0f0"/><rect x="59.2" y="0.0" width="6.8" height="6.7" fill="#efeeee"/><rect x="65.7" y="0.0" width="6.8" height="6.7" fill="#efeeee"/><rect x="72.3" y="0.0" width="6.8" height="6.7" fill="#f0efef"/><rect x="78.8" y="0.0" width="6.8" height="6.7" fill="#efeeee"/><rect x="85.3" y="0.0" width="6.8" height="6.7" fill="#f0eeee"/><rect x="91.9" y="0.0" width="6.8" height="6.7" fill="#efeeee"/><rect x="20.0" y="6.4" width="6.8" height="6.7" fill="#eeedec"/><rect x="26.5" y="6.4" width="6.8" height="6.7" fill="#ebe9e8"/><rect x="33.1" y="6.4" width="6.8" height="6.7" fill="#eceae9"/><rect x="39.6" y="6.4" width="6.8" height="6.7" fill="#f0eeee"/><rect x="46.1" y="6.4" width="6.8" height="6.7" fill="#ebe9e8"/><rect x="52.7" y="6.4" width="6.8" height="6.7" fill="#e9e7e6"/><rect x="59.2" y="6.4" width="6.8" height="6.7" fill="#ebe9e8"/><rect x="65.7" y="6.4" width="6.8" height="6.7" fill="#eceae9"/><rect x="72.3" y="6.4" width="6.8" height="6.7" fill="#eeecec"/><rect x="78.8" y="6.4" width="6.8" height="6.7" fill="#eeeceb"/><rect x="85.3" y="6.4" width="6.8" height="6.7" fill="#efeded"/><rect x="91.9" y="6.4" width="6.8" height="6.7" fill="#f0eeee"/><rect x="20.0" y="12.9" width="6.8" height="6.7" fill="#e8e6e4"/><rect x="26.5" y="12.9" width="6.8" height="6.7" fill="#e6e4e1"/><rect x="33.1" y="12.9" width="6.8" height="6.7" fill="#e8e6e3"/><rect x="39.6" y="12.9" width="6.8" height="6.7" fill="#ebe9e8"/><rect x="46.1" y="12.9" width="6.8" height="6.7" fill="#e4e2de"/><rect x="52.7" y="12.9" width="6.8" height="6.7" fill="#d6d4d0"/><rect x="59.2" y="12.9" width="6.8" height="6.7" fill="#dad8d5"/><rect x="65.7" y="12.9" width="6.8" height="6.7" fill="#e4e0dc"/><rect x="72.3" y="12.9" width="6.8" height="6.7" fill="#ecdcd0"/><rect x="78.8" y="12.9" width="6.8" height="6.7" fill="#e2bc9e"/><rect x="85.3" y="12.9" width="6.8" height="6.7" fill="#deb090"/><rect x="91.9" y="12.9" width="6.8" height="6.7" fill="#ecd8c8"/><rect x="20.0" y="19.3" width="6.8" height="6.7" fill="#c8c6c2"/><rect x="26.5" y="19.3" width="6.8" height="6.7" fill="#c2b4a0"/><rect x="33.1" y="19.3" width="6.8" height="6.7" fill="#a88868"/><rect x="39.6" y="19.3" width="6.8" height="6.7" fill="#9a7850"/><rect x="46.1" y="19.3" width="6.8" height="6.7" fill="#9a7a52"/><rect x="52.7" y="19.3" width="6.8" height="6.7" fill="#a08060"/><rect x="59.2" y="19.3" width="6.8" height="6.7" fill="#d0a890"/><rect x="65.7" y="19.3" width="6.8" height="6.7" fill="#c89070"/><rect x="72.3" y="19.3" width="6.8" height="6.7" fill="#a86840"/><rect x="78.8" y="19.3" width="6.8" height="6.7" fill="#9a6a48"/><rect x="85.3" y="19.3" width="6.8" height="6.7" fill="#8a6040"/><rect x="91.9" y="19.3" width="6.8" height="6.7" fill="#a07050"/><rect x="20.0" y="25.7" width="6.8" height="6.7" fill="#a87848"/><rect x="26.5" y="25.7" width="6.8" height="6.7" fill="#b08050"/><rect x="33.1" y="25.7" width="6.8" height="6.7" fill="#946a40"/><rect x="39.6" y="25.7" width="6.8" height="6.7" fill="#7a5a3a"/><rect x="46.1" y="25.7" width="6.8" height="6.7" fill="#7a6040"/><rect x="52.7" y="25.7" width="6.8" height="6.7" fill="#c0a088"/><rect x="59.2" y="25.7" width="6.8" height="6.7" fill="#c8b0a0"/><rect x="65.7" y="25.7" width="6.8" height="6.7" fill="#d8d0c8"/><rect x="72.3" y="25.7" width="6.8" height="6.7" fill="#6a5048"/><rect x="78.8" y="25.7" width="6.8" height="6.7" fill="#7a4a30"/><rect x="85.3" y="25.7" width="6.8" height="6.7" fill="#8a5a3a"/><rect x="91.9" y="25.7" width="6.8" height="6.7" fill="#9a6a48"/><rect x="20.0" y="32.2" width="6.8" height="6.7" fill="#8a6438"/><rect x="26.5" y="32.2" width="6.8" height="6.7" fill="#80603a"/><rect x="33.1" y="32.2" width="6.8" height="6.7" fill="#7a6a50"/><rect x="39.6" y="32.2" width="6.8" height="6.7" fill="#d8d0c4"/><rect x="46.1" y="32.2" width="6.8" height="6.7" fill="#e8e0d8"/><rect x="52.7" y="32.2" width="6.8" height="6.7" fill="#e8d8c0"/><rect x="59.2" y="32.2" width="6.8" height="6.7" fill="#8a7060"/><rect x="65.7" y="32.2" width="6.8" height="6.7" fill="#c0a080"/><rect x="72.3" y="32.2" width="6.8" height="6.7" fill="#d0c0a0"/><rect x="78.8" y="32.2" width="6.8" height="6.7" fill="#b08060"/><rect x="85.3" y="32.2" width="6.8" height="6.7" fill="#e0b090"/><rect x="91.9" y="32.2" width="6.8" height="6.7" fill="#b07040"/><rect x="20.0" y="38.6" width="6.8" height="6.7" fill="#b8a090"/><rect x="26.5" y="38.6" width="6.8" height="6.7" fill="#e8e0d8"/><rect x="33.1" y="38.6" width="6.8" height="6.7" fill="#e8e0d8"/><rect x="39.6" y="38.6" width="6.8" height="6.7" fill="#f0e8e0"/><rect x="46.1" y="38.6" width="6.8" height="6.7" fill="#e0d0b8"/><rect x="52.7" y="38.6" width="6.8" height="6.7" fill="#b8a898"/><rect x="59.2" y="38.6" width="6.8" height="6.7" fill="#d0a890"/><rect x="65.7" y="38.6" width="6.8" height="6.7" fill="#b89070"/><rect x="72.3" y="38.6" width="6.8" height="6.7" fill="#d8c098"/><rect x="78.8" y="38.6" width="6.8" height="6.7" fill="#a87040"/><rect x="85.3" y="38.6" width="6.8" height="6.7" fill="#a86840"/><rect x="91.9" y="38.6" width="6.8" height="6.7" fill="#803818"/><rect x="20.0" y="45.1" width="6.8" height="6.7" fill="#e8e0d8"/><rect x="26.5" y="45.1" width="6.8" height="6.7" fill="#e8e0d8"/><rect x="33.1" y="45.1" width="6.8" height="6.7" fill="#e8d8c8"/><rect x="39.6" y="45.1" width="6.8" height="6.7" fill="#f0e0d0"/><rect x="46.1" y="45.1" width="6.8" height="6.7" fill="#e8e0d8"/><rect x="52.7" y="45.1" width="6.8" height="6.7" fill="#e8dcd0"/><rect x="59.2" y="45.1" width="6.8" height="6.7" fill="#a88870"/><rect x="65.7" y="45.1" width="6.8" height="6.7" fill="#a89070"/><rect x="72.3" y="45.1" width="6.8" height="6.7" fill="#6a4828"/><rect x="78.8" y="45.1" width="6.8" height="6.7" fill="#5a3018"/><rect x="85.3" y="45.1" width="6.8" height="6.7" fill="#8a5a40"/><rect x="91.9" y="45.1" width="6.8" height="6.7" fill="#c0a080"/><rect x="20.0" y="51.5" width="6.8" height="6.7" fill="#e8d8c8"/><rect x="26.5" y="51.5" width="6.8" height="6.7" fill="#f0e0c8"/><rect x="33.1" y="51.5" width="6.8" height="6.7" fill="#f0dcc0"/><rect x="39.6" y="51.5" width="6.8" height="6.7" fill="#e8d0b0"/><rect x="46.1" y="51.5" width="6.8" height="6.7" fill="#e8e0d8"/><rect x="52.7" y="51.5" width="6.8" height="6.7" fill="#a88868"/><rect x="59.2" y="51.5" width="6.8" height="6.7" fill="#b09060"/><rect x="65.7" y="51.5" width="6.8" height="6.7" fill="#a88048"/><rect x="72.3" y="51.5" width="6.8" height="6.7" fill="#70381a"/><rect x="78.8" y="51.5" width="6.8" height="6.7" fill="#683018"/><rect x="85.3" y="51.5" width="6.8" height="6.7" fill="#8a5a40"/><rect x="91.9" y="51.5" width="6.8" height="6.7" fill="#d0b8a0"/><rect x="20.0" y="57.9" width="6.8" height="6.7" fill="#c8a888"/><rect x="26.5" y="57.9" width="6.8" height="6.7" fill="#c8a070"/><rect x="33.1" y="57.9" width="6.8" height="6.7" fill="#a06828"/><rect x="39.6" y="57.9" width="6.8" height="6.7" fill="#8a5820"/><rect x="46.1" y="57.9" width="6.8" height="6.7" fill="#b09870"/><rect x="52.7" y="57.9" width="6.8" height="6.7" fill="#e8c880"/><rect x="59.2" y="57.9" width="6.8" height="6.7" fill="#c8a050"/><rect x="65.7" y="57.9" width="6.8" height="6.7" fill="#5a4020"/><rect x="72.3" y="57.9" width="6.8" height="6.7" fill="#4a3018"/><rect x="78.8" y="57.9" width="6.8" height="6.7" fill="#4a3018"/><rect x="85.3" y="57.9" width="6.8" height="6.7" fill="#5a4028"/><rect x="91.9" y="57.9" width="6.8" height="6.7" fill="#7a5a40"/><rect x="20.0" y="64.4" width="6.8" height="6.7" fill="#e0d8c8"/><rect x="26.5" y="64.4" width="6.8" height="6.7" fill="#d8c8b8"/><rect x="33.1" y="64.4" width="6.8" height="6.7" fill="#d8c8b8"/><rect x="39.6" y="64.4" width="6.8" height="6.7" fill="#705838"/><rect x="46.1" y="64.4" width="6.8" height="6.7" fill="#503010"/><rect x="52.7" y="64.4" width="6.8" height="6.7" fill="#a08840"/><rect x="59.2" y="64.4" width="6.8" height="6.7" fill="#a07830"/><rect x="65.7" y="64.4" width="6.8" height="6.7" fill="#6a4820"/><rect x="72.3" y="64.4" width="6.8" height="6.7" fill="#5a4020"/><rect x="78.8" y="64.4" width="6.8" height="6.7" fill="#402810"/><rect x="85.3" y="64.4" width="6.8" height="6.7" fill="#5a4028"/><rect x="91.9" y="64.4" width="6.8" height="6.7" fill="#402818"/><rect x="20.0" y="70.8" width="6.8" height="6.7" fill="#d8d0c8"/><rect x="26.5" y="70.8" width="6.8" height="6.7" fill="#f0e0d0"/><rect x="33.1" y="70.8" width="6.8" height="6.7" fill="#d8c0b0"/><rect x="39.6" y="70.8" width="6.8" height="6.7" fill="#d8c8b0"/><rect x="46.1" y="70.8" width="6.8" height="6.7" fill="#c0b098"/><rect x="52.7" y="70.8" width="6.8" height="6.7" fill="#5a3818"/><rect x="59.2" y="70.8" width="6.8" height="6.7" fill="#a07838"/><rect x="65.7" y="70.8" width="6.8" height="6.7" fill="#6a4820"/><rect x="72.3" y="70.8" width="6.8" height="6.7" fill="#504020"/><rect x="78.8" y="70.8" width="6.8" height="6.7" fill="#383018"/><rect x="85.3" y="70.8" width="6.8" height="6.7" fill="#383018"/><rect x="91.9" y="70.8" width="6.8" height="6.7" fill="#4a3820"/><rect x="20.0" y="77.2" width="6.8" height="6.7" fill="#d0c0b8"/><rect x="26.5" y="77.2" width="6.8" height="6.7" fill="#c8a080"/><rect x="33.1" y="77.2" width="6.8" height="6.7" fill="#c09868"/><rect x="39.6" y="77.2" width="6.8" height="6.7" fill="#e8d8c0"/><rect x="46.1" y="77.2" width="6.8" height="6.7" fill="#e8d8c0"/><rect x="52.7" y="77.2" width="6.8" height="6.7" fill="#c8a870"/><rect x="59.2" y="77.2" width="6.8" height="6.7" fill="#e8dcc8"/><rect x="65.7" y="77.2" width="6.8" height="6.7" fill="#b8b0a8"/><rect x="72.3" y="77.2" width="6.8" height="6.7" fill="#8a6a50"/><rect x="78.8" y="77.2" width="6.8" height="6.7" fill="#8a6848"/><rect x="85.3" y="77.2" width="6.8" height="6.7" fill="#a07840"/><rect x="91.9" y="77.2" width="6.8" height="6.7" fill="#806040"/><rect x="20.0" y="83.7" width="6.8" height="6.7" fill="#b0b0a8"/><rect x="26.5" y="83.7" width="6.8" height="6.7" fill="#c8c0a8"/><rect x="33.1" y="83.7" width="6.8" height="6.7" fill="#e8d8b8"/><rect x="39.6" y="83.7" width="6.8" height="6.7" fill="#f0e0c8"/><rect x="46.1" y="83.7" width="6.8" height="6.7" fill="#e0c0a0"/><rect x="52.7" y="83.7" width="6.8" height="6.7" fill="#d0b090"/><rect x="59.2" y="83.7" width="6.8" height="6.7" fill="#e0d8d0"/><rect x="65.7" y="83.7" width="6.8" height="6.7" fill="#e8e0d8"/><rect x="72.3" y="83.7" width="6.8" height="6.7" fill="#e0c0a0"/><rect x="78.8" y="83.7" width="6.8" height="6.7" fill="#d0a880"/><rect x="85.3" y="83.7" width="6.8" height="6.7" fill="#a89078"/><rect x="91.9" y="83.7" width="6.8" height="6.7" fill="#b8a088"/><rect x="20.0" y="90.1" width="6.8" height="6.7" fill="#a0a098"/><rect x="26.5" y="90.1" width="6.8" height="6.7" fill="#807868"/><rect x="33.1" y="90.1" width="6.8" height="6.7" fill="#b8b8a8"/><rect x="39.6" y="90.1" width="6.8" height="6.7" fill="#e8dcd8"/><rect x="46.1" y="90.1" width="6.8" height="6.7" fill="#e8d8c8"/><rect x="52.7" y="90.1" width="6.8" height="6.7" fill="#f0ece8"/><rect x="59.2" y="90.1" width="6.8" height="6.7" fill="#f0ece8"/><rect x="65.7" y="90.1" width="6.8" height="6.7" fill="#f0f0f0"/><rect x="72.3" y="90.1" width="6.8" height="6.7" fill="#f0f0f0"/><rect x="78.8" y="90.1" width="6.8" height="6.7" fill="#e8e0d0"/><rect x="85.3" y="90.1" width="6.8" height="6.7" fill="#e0d8c8"/><rect x="91.9" y="90.1" width="6.8" height="6.7" fill="#e8e4e0"/><rect x="20.0" y="96.6" width="6.8" height="6.7" fill="#d0d8e0"/><rect x="26.5" y="96.6" width="6.8" height="6.7" fill="#b0b8b8"/><rect x="33.1" y="96.6" width="6.8" height="6.7" fill="#8a8878"/><rect x="39.6" y="96.6" width="6.8" height="6.7" fill="#b0a898"/><rect x="46.1" y="96.6" width="6.8" height="6.7" fill="#d8b8a0"/><rect x="52.7" y="96.6" width="6.8" height="6.7" fill="#d8a890"/><rect x="59.2" y="96.6" width="6.8" height="6.7" fill="#d8b098"/><rect x="65.7" y="96.6" width="6.8" height="6.7" fill="#d0c8c0"/><rect x="72.3" y="96.6" width="6.8" height="6.7" fill="#c0c0c8"/><rect x="78.8" y="96.6" width="6.8" height="6.7" fill="#b0b0b0"/><rect x="85.3" y="96.6" width="6.8" height="6.7" fill="#b8b8b8"/><rect x="91.9" y="96.6" width="6.8" height="6.7" fill="#c0c0d0"/><rect x="20.0" y="103.0" width="6.8" height="6.7" fill="#c8c8c8"/><rect x="26.5" y="103.0" width="6.8" height="6.7" fill="#d8d8d8"/><rect x="33.1" y="103.0" width="6.8" height="6.7" fill="#d0d8e0"/><rect x="39.6" y="103.0" width="6.8" height="6.7" fill="#d0d8e0"/><rect x="46.1" y="103.0" width="6.8" height="6.7" fill="#c8d0d8"/><rect x="52.7" y="103.0" width="6.8" height="6.7" fill="#c0c0c0"/><rect x="59.2" y="103.0" width="6.8" height="6.7" fill="#d8c8c8"/><rect x="65.7" y="103.0" width="6.8" height="6.7" fill="#d8d8d8"/><rect x="72.3" y="103.0" width="6.8" height="6.7" fill="#d0c8c8"/><rect x="78.8" y="103.0" width="6.8" height="6.7" fill="#d0d0d8"/><rect x="85.3" y="103.0" width="6.8" height="6.7" fill="#d0d8e0"/><rect x="91.9" y="103.0" width="6.8" height="6.7" fill="#c8c8d8"/><rect x="20.0" y="109.4" width="6.8" height="6.7" fill="#a8a8a0"/><rect x="26.5" y="109.4" width="6.8" height="6.7" fill="#c0c8c0"/><rect x="33.1" y="109.4" width="6.8" height="6.7" fill="#c8c8c0"/><rect x="39.6" y="109.4" width="6.8" height="6.7" fill="#e0e0e0"/><rect x="46.1" y="109.4" width="6.8" height="6.7" fill="#e0e4e8"/><rect x="52.7" y="109.4" width="6.8" height="6.7" fill="#e0e4e8"/><rect x="59.2" y="109.4" width="6.8" height="6.7" fill="#d8e0e8"/><rect x="65.7" y="109.4" width="6.8" height="6.7" fill="#d8e0e8"/><rect x="72.3" y="109.4" width="6.8" height="6.7" fill="#d0d8e0"/><rect x="78.8" y="109.4" width="6.8" height="6.7" fill="#e8e8f0"/><rect x="85.3" y="109.4" width="6.8" height="6.7" fill="#e8e4e0"/><rect x="91.9" y="109.4" width="6.8" height="6.7" fill="#f0e0d8"/><rect x="20.0" y="115.9" width="6.8" height="6.7" fill="#c0c0b8"/><rect x="26.5" y="115.9" width="6.8" height="6.7" fill="#d0d0c8"/><rect x="33.1" y="115.9" width="6.8" height="6.7" fill="#e0e0d8"/><rect x="39.6" y="115.9" width="6.8" height="6.7" fill="#e8e8e8"/><rect x="46.1" y="115.9" width="6.8" height="6.7" fill="#e8e8e8"/><rect x="52.7" y="115.9" width="6.8" height="6.7" fill="#f0f0f0"/><rect x="59.2" y="115.9" width="6.8" height="6.7" fill="#e8f0f0"/><rect x="65.7" y="115.9" width="6.8" height="6.7" fill="#e8f0f0"/><rect x="72.3" y="115.9" width="6.8" height="6.7" fill="#f0f0f0"/><rect x="78.8" y="115.9" width="6.8" height="6.7" fill="#d0d8e0"/><rect x="85.3" y="115.9" width="6.8" height="6.7" fill="#f0f0f0"/><rect x="91.9" y="115.9" width="6.8" height="6.7" fill="#f0f0f0"/><rect x="98.4" y="96.6" width="6.8" height="6.7" fill="#c8c8d8"/><rect x="104.9" y="96.6" width="6.8" height="6.7" fill="#e8e8f0"/><rect x="98.4" y="103.0" width="6.8" height="6.7" fill="#d0d0e0"/><rect x="104.9" y="103.0" width="6.8" height="6.7" fill="#ececf2"/></g>
</svg>
<!-- arrow -->
<svg class="abs" style="left:425px;top:495px;z-index:6" width="110" height="115" viewBox="425 495 110 115">
  <defs><linearGradient id="ag" x1="0" y1="500" x2="0" y2="606" gradientUnits="userSpaceOnUse"><stop offset="0" stop-color="#c6d6ff"/><stop offset=".19" stop-color="#a4bfff"/><stop offset=".38" stop-color="#88a9ff"/><stop offset=".62" stop-color="#6690ff"/><stop offset="1" stop-color="#2f64ff"/></linearGradient></defs>
  <path d="M524.4 500.2C522.2 500.3 515.4 500.2 511.0 500.6C506.6 501.0 502.3 501.4 498.0 502.6C493.7 503.8 489.0 505.5 485.1 507.7C481.2 509.9 477.8 512.7 474.8 515.8C471.8 518.9 469.2 522.1 467.1 526.1C465.0 530.1 463.4 535.5 462.2 540.0C461.0 544.5 460.3 548.6 459.8 553.0C459.3 557.4 459.3 563.9 459.2 566.1L433 566.100L470.200 605.500L511.600 566.100L485.600 566.100C485.6 563.9 485.2 557.4 485.5 553.0C485.8 548.6 486.6 543.8 487.4 540.0C488.2 536.2 489.1 533.2 490.3 530.0C491.5 526.8 493.0 523.7 494.8 520.9C496.6 518.1 498.5 515.8 501.2 513.2C503.9 510.6 507.0 507.7 510.9 505.5C514.8 503.3 522.1 501.1 524.4 500.2Z" fill="url(#ag)"/>
</svg>

<!-- ================= RIGHT PANEL ================= -->
<div id="rp">
  <div class="dot" style="top:-10px">&#183;</div><div class="li" style="top:-10px;letter-spacing:0.18px">Messages</div>
  <div class="dot" style="top:20px">&#183;</div><div class="li" style="top:20px;letter-spacing:0.13px">Google</div>
  <div class="dot" style="top:49.5px">&#183;</div><div class="li" style="top:49.5px;letter-spacing:0.30px">WhatsApp</div>
  <div class="dot" style="top:79px">&#183;</div><div class="li" style="top:79px;letter-spacing:0.14px">Facebook</div>
  <div class="dot" style="top:108.5px">&#183;</div><div class="li" style="top:108.5px;letter-spacing:0.29px">Telegram</div>
  <div class="dot" style="top:138px">&#183;</div><div class="li" style="top:138px;letter-spacing:0.20px">Live Shopping</div>
  <div class="lab" style="top:178px;letter-spacing:0.52px">Markets</div><div class="lnk" style="top:178.5px;letter-spacing:0.32px;right:19.98px">Manage</div>
  <div class="lab" style="top:206px;font-size:14px"><span style="font-weight:700">&#183;</span><span style="letter-spacing:-.22px;font-size:14px"> Malaysi...</span></div>
  <div class="lab" style="top:245.5px;letter-spacing:-0.55px">SPU</div>
  <svg class="abs" style="left:52px;top:247.5px" width="15" height="15" viewBox="0 0 15 15" fill="none" stroke="#3a4054" stroke-width="1.200"><circle cx="7.500" cy="7.500" r="6.200"/><path d="M5.700 6c0-1.100.8-1.800 1.900-1.800s1.800.7 1.800 1.600c0 1.500-1.800 1.500-1.800 3" /><circle cx="7.600" cy="10.700" r=".8" fill="#3a4054" stroke="none"/></svg>
  <div class="inp" style="top:270.5px"><span style="letter-spacing:-.08px">Add SPU</span></div>
  <div class="lab" style="top:326px;letter-spacing:0.54px">Vendor</div>
  <div class="inp" style="top:351.5px"><span style="letter-spacing:-.01px">Example: Zara</span></div>
  <div class="lab" style="top:406.5px;letter-spacing:0.66px">Tag</div><div class="lnk" style="top:407px;letter-spacing:0.29px;right:20.01px">View all tags</div>
  <div class="inp" style="top:432.5px"><span style="letter-spacing:.35px">Add tags</span></div>
  <div class="abs" style="left:20px;top:473px;width:205px;height:62px;filter:blur(.6px)">
    <div class="abs" style="left:0;top:0;width:119px;height:62px;background:#e6eefc"></div>
    <div class="abs" style="left:125px;top:0;width:73px;height:62px;background:#e6eefc"></div>
    <div class="abs" style="left:198px;top:0;width:7px;height:62px;background:#f0f4fd"></div>
    <div class="abs" style="left:7px;top:13px;width:105px;height:7px;background:linear-gradient(90deg,#c9d2e6 0 12%,#b0bad2 12% 25%,#9aa6c2 25% 31%,#b0bad2 31% 43%,#a4afca 43% 56%,#c0c9e0 56% 75%,#aab5ce 75% 81%,#cfd8ec 81% 93%,#b6c0d8 93%)"></div>
    <div class="abs" style="left:7px;top:20px;width:105px;height:6px;background:linear-gradient(90deg,#d6deef 0 30%,#c5cee3 30% 45%,#dbe3f3 45% 80%,#cbd4e8 80%)"></div>
    <div class="abs" style="left:132px;top:13px;width:59px;height:7px;background:linear-gradient(90deg,#d0d9ec 0 11%,#b6c0d8 11% 33%,#aab5ce 33% 55%,#c0c9e0 55% 77%,#b0bad2 77% 89%,#c9d2e6 89%)"></div>
    <div class="abs" style="left:145px;top:20px;width:13px;height:6px;background:#a7b2cb"></div>
    <div class="abs" style="left:7px;top:46px;width:105px;height:7px;background:linear-gradient(90deg,#b6c0d8 0 6%,#8f9bb8 6% 12%,#a4afca 12% 25%,#9aa6c2 25% 37%,#a4afca 37% 56%,#b6c0d8 56% 68%,#9aa6c2 68% 81%,#d6deef 81% 93%,#b6c0d8 93%)"></div>
    <div class="abs" style="left:13px;top:40px;width:90px;height:6px;background:linear-gradient(90deg,#d6deef 0 20%,#dfe7f6 20% 60%,#d0d9ec 60% 75%,#dfe7f6 75%)"></div>
    <div class="abs" style="left:132px;top:46px;width:39px;height:7px;background:linear-gradient(90deg,#b6c0d8 0 16%,#c9d2e6 16% 33%,#8f9bb8 33% 66%,#8590ae 66%)"></div>
    <div class="abs" style="left:178px;top:46px;width:13px;height:7px;background:#c3cce2"></div>
    <div class="abs" style="left:132px;top:40px;width:13px;height:6px;background:#d0d9ec"></div>
  </div>
  <div class="lab" style="top:559.5px;letter-spacing:0.56px">Product type</div><div class="lnk" style="top:559.5px;letter-spacing:0.63px;right:19.37px">Custom</div>
  <svg class="abs" style="left:198px;top:564px" width="10" height="10" viewBox="0 0 10 10" stroke="#3d62f0" stroke-width="1.100" fill="none"><path d="M5 .8v8.400M.8 5h8.400"/></svg>
  <div class="inp" style="top:583.5px"></div>
  <div class="abs" style="left:28px;top:595px;width:78px;height:13px;filter:blur(.6px);background:linear-gradient(90deg,#ececee 0 17%,#dcdce0 17% 33%,#e6e6e9 33% 50%,#c4c5ca 50% 58%,#d4d5d9 58% 75%,#c8c9ce 75% 83%,#d8d9dd 83% 92%,#f0f0f2 92%)"></div>
  <svg class="abs" style="left:235px;top:596.300px" width="12" height="10" viewBox="0 0 12 10" stroke="#5f677c" stroke-width="1.300" fill="none"><path d="M1.800 3l4.200 4.200L10.200 3"/></svg>
  <div class="lab" style="top:639.5px;letter-spacing:0.50px">Collections</div><div class="lnk" style="top:640px;letter-spacing:0.48px;right:19.12px">Add new</div>
  <div class="abs" id="ctext" style="left:20px;top:661.400px;width:260px;font-size:14px;line-height:21px;color:#7a8499;letter-spacing:.18px;white-space:nowrap">If you've turned on Smart Collections,<br>we'll automatically match it with<br>items that fit.</div>
</div>

<!-- chat -->
<div class="abs" style="left:1532.800px;top:666.800px;width:47px;height:47px;border-radius:50%;background:#4f8ff0;box-shadow:0 3px 16px 2px rgba(40,50,90,.10);z-index:8"></div>
<svg class="abs" style="left:1543px;top:675.500px;z-index:9" width="28" height="28" viewBox="0 0 28 28"><path d="M4.400 2.600h17.100a2 2 0 0 1 2 2v21.700l-5.800-2H4.400a2 2 0 0 1-2-2V4.600a2 2 0 0 1 2-2z" fill="#fff"/><path d="M5.600 17.200c4.200 3.600 10.300 3.600 14.500 0" stroke="#4f8ff0" stroke-width="1.300" fill="none"/></svg>
<!-- bottom shade -->
<div class="abs" style="left:290px;top:782px;width:975px;height:30px;box-shadow:0 0 42px 2px rgba(92,97,112,.46);z-index:30;pointer-events:none"></div>

<!-- ================= SIDEBAR ================= -->
<div id="side">
  <div class="act"></div>
  <!-- Home -->
  <svg style="left:25px;top:18px" width="16" height="16" viewBox="0 0 16 16" fill="none" stroke="#1d2433" stroke-width="1.5"><rect x="1.75" y="1.75" width="4.3" height="12.8"/><rect x="9" y="1.75" width="4.6" height="5"/><path d="M9 14.5V10.2h4.6"/><path d="M13.6 11.2c0 2-1.2 3.2-3 3.3" stroke="#3d62f0"/></svg>
  <div class="nav" style="top:16px;letter-spacing:0.31px">Home</div>
  <!-- Orders -->
  <svg style="left:25px;top:53px" width="16" height="16" viewBox="0 0 16 16" fill="none" stroke="#1d2433" stroke-width="1.5"><path d="M2.2 2.3h11.3v9.6c0 1.6-1 2.7-2.7 2.7H2.2z" stroke-linejoin="round"/><path d="M5 8.3h4.2M5 10.9h2.2" stroke="#3d62f0" stroke-width="1.3"/></svg>
  <div class="nav" style="top:52px;letter-spacing:0.40px">Orders</div>
  <div class="abs" style="left:182px;top:52px;width:31px;height:20px;border-radius:10px;background:#dcdee8"></div>
  <div class="abs" style="left:192px;top:56px;width:13px;height:12px;background:linear-gradient(90deg,#d2d4dd 0 25%,#b4b7c3 25% 60%,#a9acb9 60%)"></div>
  <!-- Products -->
  <svg style="left:25px;top:89px" width="16" height="16" viewBox="0 0 16 16" fill="none" stroke="#3d62f0" stroke-width="1.5" stroke-linejoin="round"><path d="M3.2 5.6h9.6l1 8.9H2.2z"/><path d="M5.6 7.6V4.2a2.4 2.4 0 0 1 4.8 0v3.4"/></svg>
  <div class="nav blue" style="top:87px;letter-spacing:0.51px">Products</div>
  <div class="nav sub" style="top:123px;letter-spacing:0.53px">Inventory</div>
  <div class="nav sub" style="top:158px;letter-spacing:0.47px">Transfer</div>
  <div class="nav sub" style="top:194px;letter-spacing:0.32px">Purchase orders</div>
  <div class="nav sub" style="top:229px;letter-spacing:0.52px">Collections</div>
  <div class="nav sub" style="top:265px;letter-spacing:0.50px">Gift cards</div>
  <!-- Customers -->
  <svg style="left:25px;top:302px" width="16" height="16" viewBox="0 0 16 16" fill="none" stroke="#1d2433" stroke-width="1.5" stroke-linecap="round"><circle cx="8" cy="4.9" r="2.9"/><path d="M1.8 14.2c.4-3 2.9-4.6 6.2-4.6s5.800 1.600 6.200 4.600"/><path d="M8 12.3v.9" stroke="#3d62f0"/></svg>
  <div class="nav" style="top:300px;letter-spacing:0.44px">Customers</div>
  <!-- Discounts -->
  <svg style="left:25px;top:337px" width="16" height="16" viewBox="0 0 16 16" fill="none" stroke="#1d2433" stroke-width="1.5" stroke-linejoin="round"><path d="M1.500 9.300L8 2.600l6.300-.9-.9 6.300-6.500 6.700z"/><circle cx="11.2" cy="4.900" r=".7" fill="#3d62f0" stroke="none"/></svg>
  <div class="nav" style="top:336px;letter-spacing:0.50px">Discounts</div>
  <!-- Marketing -->
  <svg style="left:25px;top:373px" width="16" height="16" viewBox="0 0 16 16" fill="none" stroke="#1d2433" stroke-width="1.5" stroke-linejoin="round"><path d="M8 1.300l6 3.400v6.800l-6 3.400-6-3.400V4.700z"/><path d="M8 15V8l6-3.300"/><path d="M2.600 5L8 8" stroke="#3d62f0"/></svg>
  <div class="nav" style="top:371px;letter-spacing:0.54px">Marketing</div>
  <!-- Analytics -->
  <svg style="left:25px;top:409px" width="16" height="16" viewBox="0 0 16 16" fill="none" stroke="#1d2433" stroke-width="1.5"><path d="M6.600 2.200A6.300 6.300 0 1 0 14 9.400"/><path d="M9 1.600v5.600h5.600A5.700 5.700 0 0 0 9 1.600z" stroke-linejoin="round"/><path d="M4.300 9.600a3.800 3.800 0 0 0 2.200 2.600" stroke="#3d62f0"/></svg>
  <div class="nav" style="top:407px;letter-spacing:0.53px">Analytics</div>

  <div class="sec" style="left:26px;top:468px;letter-spacing:.6px">Apps</div>
  <svg style="left:59px;top:471px" width="8" height="10" viewBox="0 0 8 10" fill="none" stroke="#8892a6" stroke-width="1.2"><path d="M2 1.500L5.800 5 2 8.500"/></svg>
  <svg style="left:197px;top:469.300px" width="12" height="12" viewBox="0 0 12 12" fill="none" stroke="#8892a6" stroke-width="1.200"><path d="M6 1v10M1 6h10"/></svg>
  <div class="sec" style="left:24px;top:525px;left:24.300px;letter-spacing:.25px">Channels</div>
  <svg style="left:81px;top:528px" width="8" height="10" viewBox="0 0 8 10" fill="none" stroke="#8892a6" stroke-width="1.2"><path d="M2 1.500L5.800 5 2 8.500"/></svg>
  <svg style="left:197px;top:526.400px" width="12" height="12" viewBox="0 0 12 12" fill="none" stroke="#8892a6" stroke-width="1.200"><path d="M6 1v10M1 6h10"/></svg>

  <!-- Online store -->
  <svg style="left:27px;top:558px" width="16" height="16" viewBox="0 0 16 16" fill="none" stroke="#1d2433" stroke-width="1.400" stroke-linejoin="round"><path d="M1.600 6.900L2.900 2.900Q3.200 1.900 4.200 1.900H11.800Q12.800 1.900 13.100 2.900L14.400 6.900H9.600L8 8.300 6.400 6.900z"/><path d="M2.300 6.900V12.900Q2.300 14.200 3.600 14.200H12.400Q13.700 14.200 13.700 12.900V6.900"/><path d="M5.800 14.200V11.600"/></svg>
  <div class="nav" style="left:52px;top:556px;letter-spacing:0.25px">Online Store</div>
  <svg style="left:192px;top:560px" width="17" height="12" viewBox="0 0 17 12"><path d="M8.500.500C4.800.500 1.700 2.800.400 6c1.300 3.200 4.400 5.500 8.100 5.500s6.800-2.300 8.100-5.500C15.300 2.800 12.200.500 8.500.500z" fill="#7a8499"/><circle cx="8.500" cy="6" r="3.300" fill="#edeef2"/><circle cx="8.500" cy="6" r="1.900" fill="#7a8499"/></svg>
  <!-- Messages -->
  <svg style="left:27px;top:594px" width="16" height="16" viewBox="0 0 16 16" fill="none" stroke="#1d2433" stroke-width="1.400" stroke-linejoin="round"><path d="M6.900 2.200a5.100 5.100 0 0 1 5.100 5.100 5.100 5.100 0 0 1-5.100 5.100H1.900V7.300a5 5 0 0 1 5-5.100z"/><path d="M12.300 7.600a3.600 3.600 0 0 1 2.200 3.300v2.500h-3.700a3.600 3.600 0 0 1-2.500-1.100"/><circle cx="5.300" cy="7.300" r=".8" fill="#1d2433" stroke="none"/><circle cx="8.300" cy="7.300" r=".8" fill="#1d2433" stroke="none"/></svg>
  <div class="nav" style="left:52px;top:592px;letter-spacing:0.30px">Messages</div>
  <!-- Live shopping -->
  <svg style="left:27px;top:629px" width="16" height="16" viewBox="0 0 16 16" fill="none" stroke="#1d2433" stroke-width="1.400" stroke-linejoin="round"><rect x="1.200" y="3.200" width="10.300" height="9.600" rx="1.800"/><path d="M11.600 6.400l3-1.200v5.600l-3-1.200"/><path d="M3.300 5.600h1.400" /></svg>
  <div class="nav" style="left:52px;top:627px;letter-spacing:0.29px">Live Shopping</div>
  <!-- Settings -->
  <svg style="left:25px;top:685px" width="16" height="18" viewBox="0 0 16 18" fill="none" stroke="#1d2433" stroke-width="1.400" stroke-linejoin="round"><path d="M8 1.500l6.200 3.600v7.800L8 16.500l-6.200-3.600V5.100z"/><circle cx="8" cy="9" r="1.900" stroke="#3d62f0" stroke-width="1.600"/></svg>
  <div class="nav" style="top:684px;letter-spacing:0.57px">Settings</div>
</div>

<!-- ================= HEADER ================= -->
<div id="hdr">
  <!-- logo -->
  <svg class="abs" style="left:20px;top:10px" width="170" height="36" viewBox="0 0 170 36">
    <text x="4" y="27.100" font-family="Liberation Sans, sans-serif" font-weight="700" font-size="29.500" fill="#1f2a37" textLength="78.500" lengthAdjust="spacingAndGlyphs">SH<tspan fill="#ffffff">O</tspan>P</text>
    <circle cx="53.900" cy="17.800" r="9.900" fill="#1f2a37"/>
    <path d="M50.800 12.300l6.400-2.300c2.400 1.400 4 3.400 4.600 6l-3.600 9.300c-1.400.6-3.600.8-5.400-.2z" fill="#fff"/>
    <circle cx="54.400" cy="14.900" r="1.100" fill="#1f2a37"/>
    <path d="M52.300 20.300l7.300 4.400M52.400 22.300l5.600 3.700M52.600 24.200l3.400 2.400" stroke="#1f2a37" stroke-width=".6" fill="none"/>
    <text x="81.800" y="27.300" font-family="DejaVu Sans Light, DejaVu Sans, sans-serif" font-weight="200" font-size="26.800" fill="#1f2a37" stroke="#1f2a37" stroke-width=".55" textLength="53.500" lengthAdjust="spacingAndGlyphs">LINE</text>
    <path d="M149.500 14.600l4.600 4.600 4.600-4.600" fill="none" stroke="#4a5470" stroke-width="1.400"/>
  </svg>
  <div id="search">
    <svg class="abs" style="left:9px;top:8.500px" width="16" height="16" viewBox="0 0 16 16" fill="none" stroke="#3a4052" stroke-width="1.500"><circle cx="6.800" cy="6.800" r="4.600"/><path d="M10.200 10.200l4 4" stroke-linecap="round"/></svg>
    <span class="ph" style="letter-spacing:.13px">Search</span>
  </div>
  <!-- blurred store name -->
  <div class="abs" style="left:1164px;top:18px;width:196px;height:21px;filter:blur(.6px)">
    <div class="abs" style="left:0;top:0;width:46px;height:7px;background:linear-gradient(90deg,#f0f0f2 0 14%,#c6c7cd 14% 28%,#dadbdf 28% 42%,#f6f6f7 42%)"></div>
    <div class="abs" style="left:7px;top:7px;width:39px;height:7px;background:linear-gradient(90deg,#c6c7cd 0 16%,#a6a8b0 16% 33%,#888a94 33% 50%,#9a9ca5 50% 66%,#8c8e98 66% 83%,#9a9ca5 83%)"></div>
    <div class="abs" style="left:7px;top:14px;width:39px;height:6px;background:#f1f1f3"></div>
    <div class="abs" style="left:53px;top:0;width:143px;height:7px;background:linear-gradient(90deg,#c0c1c8 0 4.500%,#e4e4e8 4.500% 9%,#f5f5f7 9% 36%,#e4e5e8 36% 45%,#f2f2f4 45% 50%,#dedfe3 50% 55%,#f5f5f7 55% 59%,#e0e0e4 59% 64%,#c6c7cd 64% 68%,#f2f2f4 68% 73%,#d8d9dd 73% 77%,#f5f5f7 77%)"></div>
    <div class="abs" style="left:53px;top:7px;width:137px;height:7px;background:linear-gradient(90deg,#9a9ca5 0 4.700%,#888a94 4.700% 9.500%,#b2b3ba 9.500% 19%,#9a9ca5 19% 24%,#acadb5 24% 28%,#a0a2ab 28% 43%,#b2b3ba 43% 52%,#9496a0 52% 57%,#c0c1c8 57% 67%,#a0a2ab 67% 76%,#7e808b 76% 81%,#a6a8b0 81% 86%,#80828d 86% 90%,#a6a8b0 90%)"></div>
    <div class="abs" style="left:53px;top:14px;width:137px;height:6px;background:linear-gradient(90deg,#dcdde1 0 4.700%,#f3f3f5 4.700% 19%,#e6e7ea 19% 24%,#f3f3f5 24% 67%,#e6e7ea 67% 76%,#f3f3f5 76% 95%,#d8d9dd 95%)"></div>
  </div>
  <svg class="abs" style="left:1370px;top:21px" width="14" height="12" viewBox="0 0 14 12" fill="none" stroke="#2a3042" stroke-width="1.500"><path d="M2 3.500l5 5 5-5"/></svg>
  <div class="abs" style="left:1414px;top:18px;width:1px;height:19px;background:#e6e8f0"></div>
  <!-- bell -->
  <svg class="abs" style="left:1434px;top:17px" width="20" height="21" viewBox="0 0 20 21" fill="none" stroke="#1d2433" stroke-width="1.600" stroke-linejoin="round" stroke-linecap="round"><path d="M10 3.300c-2.900 0-4.900 2.200-4.900 5v4.200l-1.300 2.600h12.400l-1.300-2.600V8.300c0-2.800-2-5-4.900-5z"/><path d="M10 3.300V2.200"/><path d="M8.200 17.200c.4.800 1 1.200 1.800 1.200s1.400-.4 1.800-1.200"/></svg>
  <!-- help -->
  <svg class="abs" style="left:1474px;top:17px" width="20" height="20" viewBox="0 0 20 20" fill="none" stroke="#1d2433" stroke-width="1.500"><circle cx="9.800" cy="10.200" r="7.800"/><path d="M7.500 8.200c0-1.400 1-2.300 2.400-2.300s2.300.9 2.300 2.100c0 1.900-2.300 1.900-2.300 3.800" stroke-width="1.400"/><circle cx="9.900" cy="14.200" r=".95" fill="#1d2433" stroke="none"/></svg>
  <!-- wifi -->
  <svg class="abs" style="left:1512px;top:18px" width="22" height="18" viewBox="0 0 22 18" fill="none" stroke="#1d2433" stroke-width="1.600" stroke-linecap="round"><path d="M2.300 6.600c5-4.800 12.400-4.800 17.400 0"/><path d="M5.600 10c3.200-3 7.600-3 10.800 0"/><path d="M8.400 13.200l2.600 2.600 2.600-2.600c-1.600-1.300-3.600-1.300-5.200 0z" fill="#1d2433" stroke="none"/></svg>
  <!-- avatar -->
  <svg class="abs" style="left:1552px;top:13px" width="29" height="29" viewBox="0 0 29 29"><defs><clipPath id="avc"><circle cx="14.500" cy="14.500" r="14"/></clipPath></defs><circle cx="14.500" cy="14.500" r="14" fill="#ecf0fe"/><g clip-path="url(#avc)" fill="#b9c7fb"><circle cx="14.500" cy="10.500" r="5.600"/><path d="M4.600 25.500c0-5.600 4-8.600 9.900-8.600s9.900 3 9.900 8.600c0 1.200-4 2.600-9.900 2.600s-9.900-1.400-9.900-2.600z"/></g></svg>
</div>

</body>
</html>
